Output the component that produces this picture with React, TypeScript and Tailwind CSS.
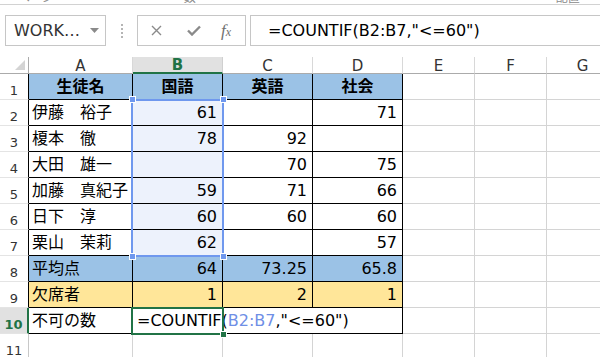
import React from 'react';

const font = "font-['DejaVu_Sans','Noto_Sans_CJK_JP',sans-serif]";

const cols = ['A', 'B', 'C', 'D', 'E', 'F', 'G'];

type Row = {
	cells: (string | null)[];
	bg?: string;
	bold?: boolean;
};

const rows: Row[] = [
	{ cells: ['生徒名', '国語', '英語', '社会'], bg: 'bg-[#9bc2e6]', bold: true },
	{ cells: ['伊藤　裕子', '61', '', '71'] },
	{ cells: ['榎本　徹', '78', '92', ''] },
	{ cells: ['大田　雄一', '', '70', '75'] },
	{ cells: ['加藤　真紀子', '59', '71', '66'] },
	{ cells: ['日下　淳', '60', '60', '60'] },
	{ cells: ['栗山　茉莉', '62', '', '57'] },
	{ cells: ['平均点', '64', '73.25', '65.8'], bg: 'bg-[#9bc2e6]' },
	{ cells: ['欠席者', '1', '2', '1'], bg: 'bg-[#ffe699]' },
];

function RowHead({ n }: { n: number }) {
	const active = n === 10;
	const edge = active
		? 'border-r-2 border-r-[#217346] bg-[#e1e1e1] text-[#217346] font-bold'
		: n <= 9
			? 'border-r border-r-black text-[#333]'
			: 'border-r border-r-[#c8c8c8] text-[#333]';
	return (
		<div
			className={`h-[26px] border-b border-b-[#e4e4e4] flex items-end justify-center pb-[2px] text-[13px] leading-none ${edge}`}
		>
			{n}
		</div>
	);
}

function Cell({
	text,
	bg,
	bold,
	col,
	selected,
}: {
	text: string | null;
	bg?: string;
	bold?: boolean;
	col: number;
	selected?: boolean;
}) {
	const isName = col === 0;
	const align = bold ? 'justify-center' : isName ? 'justify-start pl-[3px]' : 'justify-end pr-[5px]';
	const fill = bg ?? (selected ? 'bg-[#edf2fc]' : 'bg-white');
	return (
		<div
			className={`h-[26px] border-r border-b border-black flex items-center whitespace-nowrap text-[16px] text-black ${align} ${fill} ${bold ? 'font-bold' : ''}`}
		>
			{text}
		</div>
	);
}

function Blank() {
	return <div className="h-[26px] border-r border-b border-[#d4d4d4] bg-white" />;
}

export default function App() {
	return (
		<div className={`w-[600px] h-[357px] overflow-hidden bg-white ${font}`}>
			{/* top strip, cut-off ribbon text */}
			<div className="h-[5px] overflow-hidden border-b border-[#d2d2d2] flex text-[12px] text-[#8a8a8a]">
				<span className="-mt-[11px] ml-[18px]">ページ</span>
				<span className="-mt-[11px] ml-[130px]">数</span>
				<span className="-mt-[11px] ml-[360px]">配置</span>
			</div>

			{/* formula bar */}
			<div className="mt-[10px] h-[31px] flex items-stretch">
				<div className="ml-[5px] w-[101px] border border-[#c6c6c6] flex items-center pl-[8px] pr-[6px] text-[16px] text-[#333]">
					<span className="flex-1">WORK…</span>
					<svg width="9" height="5" viewBox="0 0 9 5">
						<polygon points="0,0 9,0 4.5,5" fill="#8a8a8a" />
					</svg>
				</div>
				<div className="w-[31px] flex flex-col items-center justify-center gap-[2px]">
					<span className="w-[2px] h-[2px] bg-[#b5b5b5]" />
					<span className="w-[2px] h-[2px] bg-[#b5b5b5]" />
					<span className="w-[2px] h-[2px] bg-[#b5b5b5]" />
					<span className="w-[2px] h-[2px] bg-[#b5b5b5]" />
				</div>
				<div className="w-[109px] border border-[#c6c6c6] flex items-center">
					<svg className="ml-[13px]" width="11" height="11" viewBox="0 0 11 11">
						<path d="M1 1 L10 10 M10 1 L1 10" stroke="#8a8a8a" strokeWidth="1.4" />
					</svg>
					<svg className="ml-[25px]" width="14" height="11" viewBox="0 0 14 11">
						<path d="M1 5.5 L5 9.5 L13 1.5" stroke="#8a8a8a" strokeWidth="2.4" fill="none" />
					</svg>
					<span className="ml-[20px] text-[17px] italic text-[#707070] font-['Liberation_Serif',serif] leading-none">
						f<span className="text-[12px]">x</span>
					</span>
				</div>
				<div className="ml-[4px] flex-1 border border-r-0 border-[#c6c6c6] flex items-center pl-[17px] text-[16px] text-black whitespace-nowrap">
					=COUNTIF(B2:B7,"&lt;=60")
				</div>
			</div>

			{/* grid */}
			<div className="relative mt-[11px]">
				<div className="grid grid-cols-[29px_104px_90px_90px_90px_72px_72px_72px]">
					{/* column header */}
					<div className="h-[17px] border-r border-b border-[#ababab] bg-white flex items-end justify-end pr-[3px] pb-[3px]">
						<svg width="10" height="10" viewBox="0 0 10 10">
							<polygon points="10,0 10,10 0,10" fill="#d4d4d4" />
						</svg>
					</div>
					{cols.map((c) =>
						c === 'B' ? (
							<div
								key={c}
								className="h-[17px] bg-[#e1e1e1] border-r border-r-[#d0d0d0] border-b-2 border-b-[#217346] flex items-center justify-center text-[15px] font-bold text-[#217346] leading-none pt-[2px]"
							>
								{c}
							</div>
						) : (
							<div
								key={c}
								className="h-[17px] bg-white border-r border-r-[#d8d8d8] border-b border-b-[#ababab] flex items-center justify-center text-[15px] text-[#333] leading-none pt-[2px]"
							>
								{c}
							</div>
						)
					)}

					{rows.map((r, i) => (
						<React.Fragment key={i}>
							<RowHead n={i + 1} />
							{r.cells.map((t, j) => (
								<Cell
									key={j}
									text={t}
									bg={r.bg}
									bold={r.bold}
									col={j}
									selected={j === 1 && i >= 1 && i <= 6}
								/>
							))}
							<Blank />
							<Blank />
							<Blank />
						</React.Fragment>
					))}

					{/* row 10 */}
					<RowHead n={10} />
					<Cell text="不可の数" col={0} />
					<div className="col-span-3 h-[26px] border-r border-b border-black flex items-center pl-[4px] text-[16px] text-black whitespace-nowrap">
						=COUNTIF(<span className="text-[#6f8fe6]">B2:B7</span>,"&lt;=60")
					</div>
					<Blank />
					<Blank />
					<Blank />

					{/* row 11 */}
					<RowHead n={11} />
					<Blank />
					<Blank />
					<Blank />
					<Blank />
					<Blank />
					<Blank />
					<Blank />
				</div>

				{/* selection B2:B7 */}
				<div className="absolute left-[131px] top-[42px] w-[93px] h-[158px] border-2 border-[#6f98ee] pointer-events-none" />
				<div className="absolute left-[129px] top-[39px] w-[7px] h-[7px] bg-[#6f98ee] border border-white" />
				<div className="absolute left-[220px] top-[39px] w-[7px] h-[7px] bg-[#6f98ee] border border-white" />
				<div className="absolute left-[129px] top-[196px] w-[7px] h-[7px] bg-[#6f98ee] border border-white" />
				<div className="absolute left-[220px] top-[196px] w-[7px] h-[7px] bg-[#6f98ee] border border-white" />

				{/* active cell B10 */}
				<div className="absolute left-[131px] top-[250px] w-[93px] h-[28px] border-2 border-[#217346] pointer-events-none" />
				<div className="absolute left-[220px] top-[274px] w-[7px] h-[7px] bg-[#217346] border border-white" />
			</div>
		</div>
	);
}
